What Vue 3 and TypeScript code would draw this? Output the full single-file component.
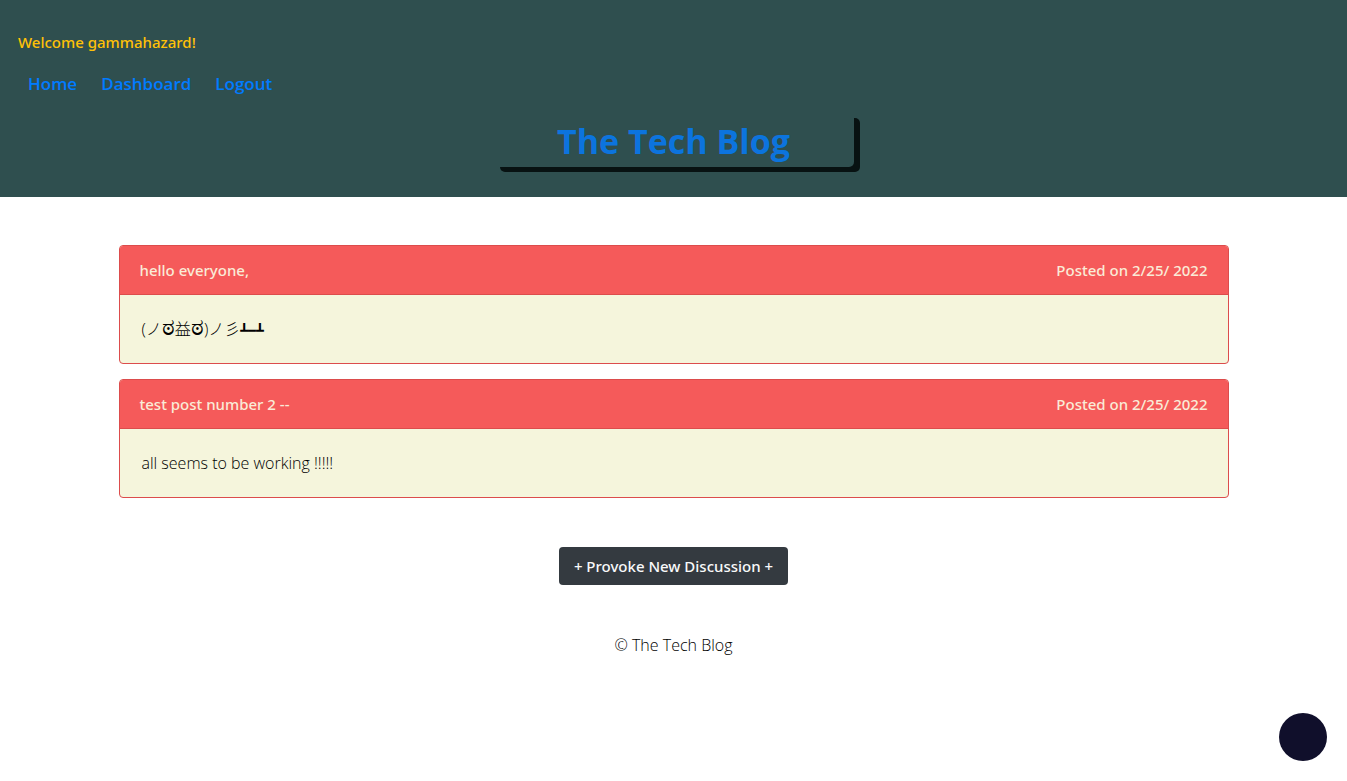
<script setup lang="ts">
interface Segment {
  text: string
  kind: 'plain' | 'eye' | 'table'
}

interface Post {
  id: number
  title: string
  date: string
  body: string
}

const user = 'gammahazard'
const links: string[] = ['Home', 'Dashboard', 'Logout']
const posts: Post[] = [
  { id: 1, title: 'hello everyone,', date: '2/25/ 2022', body: '(ノಠ益ಠ)ノ彡┻━┻' },
  { id: 2, title: 'test post number 2 --', date: '2/25/ 2022', body: 'all seems to be working !!!!!' },
]

// Kannada letters and box-drawing characters get their own type sizes.
function segments(body: string): Segment[] {
  return body
    .split(/(ಠ|[┻━]+)/)
    .filter((text) => text !== '')
    .map((text): Segment => {
      if (text === 'ಠ') return { text, kind: 'eye' }
      if (/^[┻━]/.test(text)) return { text, kind: 'table' }
      return { text, kind: 'plain' }
    })
}
</script>

<template>
  <div class="page">
    <header class="masthead">
      <p class="welcome">Welcome {{ user }}!</p>
      <nav class="nav">
        <a v-for="link in links" :key="link" href="#">{{ link }}</a>
      </nav>
      <h1 class="brand"><a href="#">The Tech Blog</a></h1>
    </header>

    <main class="posts">
      <article v-for="post in posts" :key="post.id" class="card">
        <header class="card-head">
          <span>{{ post.title }}</span>
          <span>Posted on {{ post.date }}</span>
        </header>
        <p class="card-body"><span v-for="(part, i) in segments(post.body)" :key="i" :class="part.kind">{{ part.text }}</span></p>
      </article>
      <button type="button" class="new-post">+ Provoke New Discussion +</button>
    </main>

    <footer class="footer">© The Tech Blog</footer>
    <button type="button" class="bubble" aria-label="Open widget"></button>
  </div>
</template>

<style>
body {
  margin: 0;
  background: #fff;
}
</style>

<style scoped>
.page {
  color: #212529;
  font-family: "Noto Sans", "Open Sans", "Noto Sans CJK JP", sans-serif;
  font-size: 15px;
  line-height: 24px;
}
.masthead {
  display: flex;
  flex-direction: column;
  padding: 30px 18px 30px;
  background: #2f4f4f;
}
.welcome {
  margin: 0;
  color: #ffc107;
  font-weight: 500;
}
.nav {
  display: flex;
  gap: 24px;
  margin: 16px 10px;
  font-family: "Open Sans", sans-serif;
}
.nav a {
  color: #007bff;
  font-size: 17px;
  font-weight: 600;
  line-height: 27px;
  text-decoration: none;
}
.brand {
  box-sizing: border-box;
  align-self: center;
  width: 360px;
  max-width: 100%;
  margin: 0;
  padding-top: 4px;
  padding-bottom: 2px;
  border-radius: 5px;
  box-shadow: 6px 5px #081212;
  font-family: "Open Sans", sans-serif;
  font-size: 34px;
  font-weight: 700;
  line-height: 48px;
  text-align: center;
}
.brand a {
  color: #0c74de;
  text-decoration: none;
}
.posts {
  display: flex;
  flex-direction: column;
  gap: 15px;
  max-width: 1110px;
  margin: 0 auto;
  padding: 48px 15px;
}
.card {
  border: 1px solid #dc4c4c;
  border-radius: 4px;
  background: #f5f5dc;
  overflow: hidden;
}
.card-head {
  display: flex;
  justify-content: space-between;
  padding: 12px 20px;
  border-bottom: 1px solid #dc4c4c;
  background: #f55a5a;
  color: #faebd7;
  font-weight: 500;
}
.card-body {
  margin: 0;
  padding: 22px;
  color: #000;
  font-family: "Open Sans", "Noto Sans CJK JP", sans-serif;
  font-size: 16px;
  font-weight: 300;
}
.eye {
  font-size: 24px;
  line-height: 0;
}
.table {
  font-family: "Liberation Mono", monospace;
  font-size: 13px;
  line-height: 0;
}
.new-post {
  align-self: center;
  margin-top: 34px;
  padding: 7px 15px;
  border: 0;
  border-radius: 4px;
  background: #343a40;
  color: #f8f9fa;
  font: inherit;
  font-weight: 500;
}
.footer {
  font-family: "Open Sans", sans-serif;
  font-size: 16px;
  font-weight: 300;
  text-align: center;
  color: #000;
}
.bubble {
  position: fixed;
  right: 20px;
  bottom: 20px;
  width: 48px;
  height: 48px;
  padding: 0;
  border: 0;
  border-radius: 50%;
  background: #100f2b;
}
</style>
